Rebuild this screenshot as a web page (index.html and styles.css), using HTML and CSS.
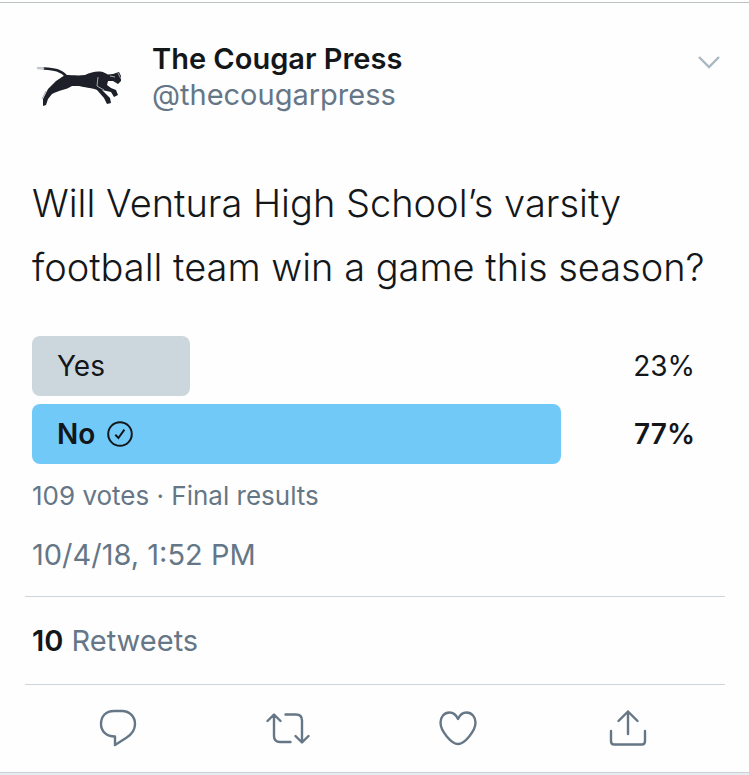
FILE: index.html
```
<!DOCTYPE html>
<html lang="en">

<head>
    <meta charset="UTF-8">
    <meta name="viewport" content="width=device-width, initial-scale=1.0">
    <title>The Cougar Press</title>
    <link rel="stylesheet" href="styles.css">
</head>

<body>
    <article class="tweet">
        <header class="tweet-header">
            <svg class="avatar" viewBox="4 0 96 96" role="img" aria-label="Cougar">
                <path d="M16 36.500 C26 37 33 38 39 45" fill="none" stroke="#1d2028" stroke-width="2.6" stroke-linecap="round" />
                <path d="M10 36 L15 36.500" stroke="#c4c8c9" stroke-width="2.6" stroke-linecap="round" />
                <path d="M37 43 C44 43 50 44 57 43 C64 40 71 38 77 41 L80 42.500 L85 42 L91 40 L93 44 L93 49 L90 52 L85 49 L80 49 L79 53 L83 56 L88 58 L90 63 L86 65 L83 60 L74 58 L78 62 L82 66 L83 71 L79 72 L76 66 L69 58 C62 55 57 56 51 54 L44 54 C38 58 31 58 24 62 L20 67 L18 73 L15 74 L15 67 L20 57 L28 49 Z" fill="#1d2028" />
                <path d="M70 45 L69 54 L76 58 M82 44 L87 45 M90 41 L93 47 M18 59 L14 67" fill="none" stroke="#a5aaae" stroke-width="1" />
            </svg>
            <div class="author">
                <h1 class="name">The Cougar Press</h1>
                <a class="handle" href="#">@thecougarpress</a>
            </div>
            <button class="more" type="button" aria-label="More options">
                <svg width="22" height="14" viewBox="0 0 22 14">
                    <path d="M1 2 L11 12 L21 2" fill="none" stroke="#aab8c2" stroke-width="2.4" />
                </svg>
            </button>
        </header>

        <p class="question">Will Ventura High School’s varsity football team win a game this season?</p>

        <ul class="poll">
            <li class="choice">
                <span class="bar" style="width: 23%">Yes</span>
                <span class="percent">23%</span>
            </li>
            <li class="choice winner">
                <span class="bar" style="width: 77%">No
                    <svg class="check" width="26" height="26" viewBox="0 0 26 26">
                        <circle cx="13" cy="13" r="11.8" />
                        <path d="M8.3 13.8 L11.4 17 L17.4 8.6" />
                    </svg>
                </span>
                <span class="percent">77%</span>
            </li>
        </ul>
        <p class="votes">109 votes · Final results</p>
        <time class="date" datetime="2018-10-04T13:52">10/4/18, 1:52 PM</time>

        <p class="stats"><strong>10</strong> Retweets</p>

        <div class="actions">
            <button type="button" aria-label="Reply">
                <svg width="44" height="44" viewBox="0 0 44 44">
                    <path d="M19 30.500 C10 30.500 5 25 5 18 C5 10 10 5 18 5 L26 5 C34 5 39 11 39 18 C39 25 35 29 30 32 L19 39 Z" />
                </svg>
            </button>
            <button type="button" aria-label="Retweet">
                <svg width="44" height="44" viewBox="0 0 44 44">
                    <path d="M1.500 15 L8 8.500 L14.500 15 M8 9 V30 Q8 36 14 36 H24.500 M19.500 8.500 H30 Q36 8.500 36 14.500 V36 M29.500 30 L36 36.500 L42.500 30" />
                </svg>
            </button>
            <button type="button" aria-label="Like">
                <svg width="44" height="44" viewBox="0 0 44 44">
                    <path d="M22 13 C20 8.500 17 6.500 13.500 6.500 C8 6.500 4.500 11 4.500 16.500 C4.500 25 15.500 38 22 38 C28.500 38 39.500 25 39.500 16.500 C39.500 11 36 6.500 30.500 6.500 C27 6.500 24 8.500 22 13 Z" />
                </svg>
            </button>
            <button type="button" aria-label="Share">
                <svg width="44" height="44" viewBox="0 0 44 44">
                    <path d="M22 28 V5.500 M12.500 15 L22 5.500 L31.500 15 M5 25 V35 Q5 38.500 8 38.500 H36 Q39 38.500 39 35 V25" />
                </svg>
            </button>
        </div>
    </article>
</body>

</html>
```

FILE: styles.css
```
html,
body,
h1,
p,
ul {
    padding: 0;
    margin: 0;
}

ul {
    list-style: none;
}

body {
    background-color: #e6ecf0;
    border-top: 2px solid #fefefe;
    color: #14171a;
    font-family: Inter, "Liberation Sans", sans-serif;
    font-size: 29px;
    line-height: 36px;
}

button {
    border: none;
    background: none;
    padding: 0;
    cursor: pointer;
}

svg {
    display: block;
}

.tweet {
    background-color: #fefefe;
    border-top: 1px solid #bdc3c5;
    border-bottom: 1px solid #c9d1d6;
}

.tweet-header {
    display: flex;
    align-items: flex-start;
    gap: 24px;
    padding: 29px 29px 0 32px;
}

.avatar {
    width: 96px;
    height: 96px;
}

.author {
    flex: 1;
    padding-top: 9px;
}

.name {
    font-size: 29px;
    font-weight: 600;
    line-height: 36px;
}

.handle {
    display: block;
    color: #657786;
    text-decoration: none;
}

.more {
    padding-top: 23px;
}

.question {
    padding: 43px 32px 0;
    font-size: 38px;
    font-weight: 300;
    line-height: 64px;
}

.poll {
    display: grid;
    gap: 8px;
    padding: 37px 30px 0 32px;
}

.choice {
    display: flex;
    justify-content: space-between;
    align-items: center;
    font-size: 28px;
}

.bar {
    display: flex;
    align-items: center;
    gap: 12px;
    box-sizing: border-box;
    height: 60px;
    padding-left: 25px;
    border-radius: 8px;
    background-color: #ccd6dd;
}

.percent {
    padding-right: 24px;
}

.winner {
    font-weight: 600;
}

.winner .bar {
    background-color: #71c9f8;
}

.check {
    fill: none;
    stroke: #14171a;
    stroke-width: 2;
}

.votes {
    padding: 14px 32px 0;
    color: #657786;
    font-size: 26px;
}

.date {
    display: block;
    padding: 23px 32px 0;
    color: #657786;
}

.stats {
    margin: 23px 24px 0 25px;
    padding: 26px 7px 25px;
    border-top: 1px solid #ccd6dd;
    border-bottom: 1px solid #ccd6dd;
    color: #657786;
}

.stats strong {
    color: #14171a;
    font-weight: 600;
}

.actions {
    display: grid;
    grid-template-columns: repeat(4, 1fr);
    justify-items: center;
    padding: 21px 36px 22px 33px;
}

.actions svg {
    fill: none;
    stroke: #657786;
    stroke-width: 2.4;
    stroke-linecap: round;
    stroke-linejoin: round;
}
```
